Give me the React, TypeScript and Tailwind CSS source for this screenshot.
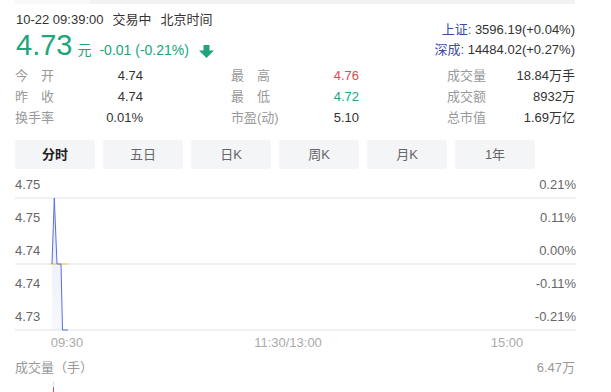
import React from "react";

const GREEN = "#21a47b";

type Stat = { label: string; value: string; color?: string };

const columns: Stat[][] = [
  [
    { label: "今开", value: "4.74" },
    { label: "昨收", value: "4.74" },
    { label: "换手率", value: "0.01%" },
  ],
  [
    { label: "最高", value: "4.76", color: "text-[#e5484d]" },
    { label: "最低", value: "4.72", color: "text-[#21a47b]" },
    { label: "市盈(动)", value: "5.10" },
  ],
  [
    { label: "成交量", value: "18.84万手" },
    { label: "成交额", value: "8932万" },
    { label: "总市值", value: "1.69万亿" },
  ],
];

const tabs = ["分时", "五日", "日K", "周K", "月K", "1年"];

function Label({ text }: { text: string }) {
  if (text.length === 2) {
    return (
      <span className="flex w-[39px] justify-between text-[#999]">
        <span>{text[0]}</span>
        <span>{text[1]}</span>
      </span>
    );
  }
  return <span className="text-[#999]">{text}</span>;
}

function DownArrow() {
  return (
    <svg width="15" height="13" viewBox="0 0 15 13" className="ml-[10px] translate-y-[3px]">
      <rect x="4.5" y="0" width="6" height="6" fill={GREEN} />
      <polygon points="0,5.5 15,5.5 7.5,13" fill={GREEN} />
    </svg>
  );
}

function PriceChart() {
  return (
    <svg className="absolute inset-0" width="561" height="162" viewBox="0 0 561 162">
      <defs>
        <linearGradient id="priceFill" x1="0" y1="0" x2="0" y2="1">
          <stop offset="0%" stopColor="#c9d1f4" stopOpacity={0.5} />
          <stop offset="100%" stopColor="#dfe4f8" stopOpacity={0.25} />
        </linearGradient>
      </defs>
      <polygon points="37,95 39.3,29 42,95 46,95 47.5,161 37,161" fill="url(#priceFill)" />
      <line x1="35" y1="95" x2="53" y2="95" stroke="#f3c550" strokeWidth="1" />
      <polyline
        points="37,95 39.3,29 42,95 46,95 47.5,161 53,161"
        fill="none"
        stroke="#5a6ee0"
        strokeWidth="1"
      />
    </svg>
  );
}

export default function App() {
  return (
    <div className="w-[611px] h-[392px] overflow-hidden bg-white text-[13px] text-[#333] font-['Liberation_Sans','Noto_Sans_CJK_SC',sans-serif]">
      {/* scrolled-off bar */}
      <div className="flex h-[4px] ml-[15px] w-[560px]">
        <div className="w-[75px] bg-[#f8f8f9]" />
        <div className="flex-1 bg-[#f1f2f4]" />
      </div>

      {/* header */}
      <div className="flex justify-between pl-[16px] pr-[36px]">
        <div>
          <div className="mt-[6px] h-[20px] leading-[20px] flex">
            <span>10-22 09:39:00</span>
            <span className="ml-[9px]">交易中</span>
            <span className="ml-[9px]">北京时间</span>
          </div>
          <div className="flex items-baseline h-[30px] leading-[30px] text-[#21a47b]">
            <span className="text-[29px]">4.73</span>
            <span className="ml-[5px] text-[14px]">元</span>
            <span className="ml-[8px] text-[14px]">-0.01 (-0.21%)</span>
            <DownArrow />
          </div>
        </div>
        <div className="mt-[16px] text-right leading-[20px]">
          <div>
            <span className="text-[#3b4ca5]">上证:</span> 3596.19(+0.04%)
          </div>
          <div>
            <span className="text-[#3b4ca5]">深成:</span> 14484.02(+0.27%)
          </div>
        </div>
      </div>

      {/* stats */}
      <div className="mt-[5px] flex gap-[88px] pl-[15px]">
        {columns.map((col, i) => (
          <div key={i} className="flex w-[128px] flex-col">
            {col.map((s) => (
              <div key={s.label} className="flex h-[21px] items-center justify-between">
                <Label text={s.label} />
                <span className={s.color ?? "text-[#333]"}>{s.value}</span>
              </div>
            ))}
          </div>
        ))}
      </div>

      {/* tabs */}
      <div className="mt-[12px] flex gap-[8px] pl-[15px]">
        {tabs.map((t, i) => (
          <div
            key={t}
            className={`flex h-[29px] w-[80px] items-center justify-center rounded-[3px] bg-[#f4f5f7] ${
              i === 0 ? "font-bold text-[#222]" : "text-[#666]"
            }`}
          >
            {t}
          </div>
        ))}
      </div>

      {/* chart */}
      <div className="relative ml-[15px] w-[561px] text-[#666]">
        <div className="flex h-[30px] items-end justify-between border-b-2 border-[#f0f0f0] pb-[2px] leading-[20px]">
          <span>4.75</span>
          <span>0.21%</span>
        </div>
        <div className="flex h-[32px] items-end justify-between pb-[3px] leading-[20px]">
          <span>4.75</span>
          <span>0.11%</span>
        </div>
        <div className="flex h-[34px] items-end justify-between border-b-2 border-[#f0f0f0] pb-[2px] leading-[20px]">
          <span>4.74</span>
          <span>0.00%</span>
        </div>
        <div className="flex h-[32px] items-end justify-between pb-[3px] leading-[20px]">
          <span>4.74</span>
          <span>-0.11%</span>
        </div>
        <div className="flex h-[34px] items-end justify-between border-b-2 border-[#f0f0f0] pb-[2px] leading-[20px]">
          <span>4.73</span>
          <span>-0.21%</span>
        </div>
        <PriceChart />
      </div>

      {/* time axis */}
      <div className="mt-[2px] flex h-[20px] items-center leading-[20px] text-[#aaa]">
        <span className="ml-[37px] w-[60px] text-center">09:30</span>
        <span className="ml-[141px] w-[100px] text-center">11:30/13:00</span>
        <span className="ml-[139px] w-[60px] text-center">15:00</span>
      </div>

      {/* volume */}
      <div className="mt-[5px] ml-[15px] flex h-[20px] w-[560px] items-center justify-between leading-[20px] text-[#999]">
        <span>成交量（手）</span>
        <span>6.47万</span>
      </div>
      <div className="ml-[53px] mt-[3px] w-[1px]">
        <div className="h-[6px] bg-[#e2e2e2]" />
        <div className="h-[6px] bg-[#e5484d]" />
      </div>
    </div>
  );
}
